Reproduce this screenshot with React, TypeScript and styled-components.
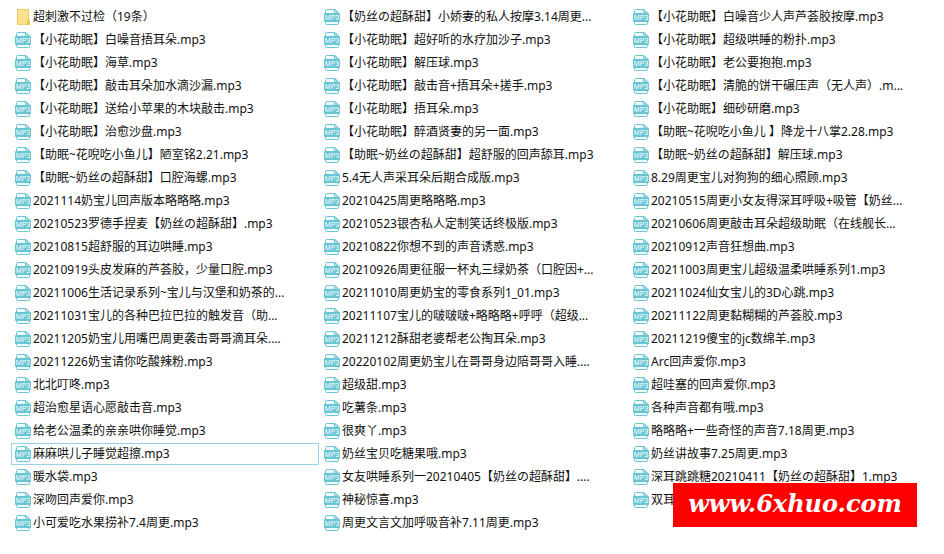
import React from "react";
import styled, { createGlobalStyle, css } from "styled-components";

const GlobalStyle = createGlobalStyle`
  body {
    margin: 0;
    background: #fff;
    color: #111;
    font-family: "Noto Sans", "Noto Sans CJK SC", sans-serif;
    font-size: 12px;
    line-height: 20px;
  }
`;

const Page = styled.main`
  position: relative;
  padding: 6px 7px 20px 11px;
`;

const FileGrid = styled.div`
  display: grid;
  grid-template-columns: repeat(3, minmax(0, 1fr));
  column-gap: 1px;
`;

const FileColumn = styled.ul`
  display: flex;
  flex-direction: column;
  gap: 1px;
  margin: 0;
  padding: 0;
  list-style: none;
`;

const FileRow = styled.li<{ $focused?: boolean }>`
  display: flex;
  align-items: center;
  gap: 2px;
  height: 20px;
  padding: 0 3px;
  border: 1px solid transparent;
  ${(p) =>
    p.$focused &&
    css`
      border-color: #99cfe8;
    `}
`;

const Icon = styled.svg`
  flex: none;
  width: 16px;
  height: 16px;
`;

const FileName = styled.span`
  overflow: hidden;
  white-space: pre;
`;

const Watermark = styled.div`
  position: absolute;
  top: 483px;
  right: 27px;
  padding: 0 15px 2px;
  background: #fe0000;
  color: #fff;
  font: italic bold 24px/42px "DejaVu Serif", serif;
`;

function FolderIcon() {
  return (
    <Icon viewBox="0 0 16 16" aria-hidden="true">
      <path d="M2 0h12v10l1 1v5H2z" fill="#efcb62" />
      <path d="M3 1h10v14H3z" fill="#f9e08c" />
      <path d="M12 10l3 1v5h-3z" fill="#eac858" />
    </Icon>
  );
}

function Mp3Icon() {
  return (
    <Icon viewBox="0 0 16 16" aria-hidden="true">
      <path
        d="M1.5 5V1.5q0-1 1-1H11L14.5 4v1M1.5 12v2.5q0 1 1 1h11q1 0 1-1V12"
        fill="#eefafc"
        stroke="#6cc4d4"
      />
      <path d="M10.5.5V3q0 1 1 1h3z" fill="#c9ecf2" stroke="#6cc4d4" />
      <rect y="4" width="16" height="9" rx="1" fill="#68c5d4" />
      <text
        x="8"
        y="11"
        textAnchor="middle"
        fill="#fff"
        fontFamily="Liberation Sans, sans-serif"
        fontSize="7"
      >
        MP3
      </text>
    </Icon>
  );
}

const FOLDER = "超刺激不过检（19条）";
const FOCUSED = "麻麻哄儿子睡觉超擦.mp3";

const columns: string[][] = [
  [
    FOLDER,
    "【小花助眠】白噪音捂耳朵.mp3",
    "【小花助眠】海草.mp3",
    "【小花助眠】敲击耳朵加水滴沙漏.mp3",
    "【小花助眠】送给小苹果的木块敲击.mp3",
    "【小花助眠】治愈沙盘.mp3",
    "【助眠~花唲吃小鱼儿】陋室铭2.21.mp3",
    "【助眠~奶丝の超酥甜】口腔海螺.mp3",
    "2021114奶宝儿回声版本略略略.mp3",
    "20210523罗德手捏麦【奶丝の超酥甜】.mp3",
    "20210815超舒服的耳边哄睡.mp3",
    "20210919头皮发麻的芦荟胶，少量口腔.mp3",
    "20211006生活记录系列~宝儿与汉堡和奶茶的...",
    "20211031宝儿的各种巴拉巴拉的触发音（助...",
    "20211205奶宝儿用嘴巴周更袭击哥哥滴耳朵....",
    "20211226奶宝请你吃酸辣粉.mp3",
    "北北叮咚.mp3",
    "超治愈星语心愿敲击音.mp3",
    "给老公温柔的亲亲哄你睡觉.mp3",
    FOCUSED,
    "暖水袋.mp3",
    "深吻回声爱你.mp3",
    "小可爱吃水果捞补7.4周更.mp3",
  ],
  [
    "【奶丝の超酥甜】小娇妻的私人按摩3.14周更...",
    "【小花助眠】超好听的水疗加沙子.mp3",
    "【小花助眠】解压球.mp3",
    "【小花助眠】敲击音+捂耳朵+搓手.mp3",
    "【小花助眠】捂耳朵.mp3",
    "【小花助眠】醉酒贤妻的另一面.mp3",
    "【助眠~奶丝の超酥甜】超舒服的回声舔耳.mp3",
    "5.4无人声采耳朵后期合成版.mp3",
    "20210425周更略略略.mp3",
    "20210523银杏私人定制笑话终极版.mp3",
    "20210822你想不到的声音诱惑.mp3",
    "20210926周更征服一杯丸三绿奶茶（口腔因+...",
    "20211010周更奶宝的零食系列1_01.mp3",
    "20211107宝儿的啵啵啵+略略略+呼呼（超级...",
    "20211212酥甜老婆帮老公掏耳朵.mp3",
    "20220102周更奶宝儿在哥哥身边陪哥哥入睡....",
    "超级甜.mp3",
    "吃薯条.mp3",
    "很爽丫.mp3",
    "奶丝宝贝吃糖果哦.mp3",
    "女友哄睡系列一20210405【奶丝の超酥甜】....",
    "神秘惊喜.mp3",
    "周更文言文加呼吸音补7.11周更.mp3",
  ],
  [
    "【小花助眠】白噪音少人声芦荟胶按摩.mp3",
    "【小花助眠】超级哄睡的粉扑.mp3",
    "【小花助眠】老公要抱抱.mp3",
    "【小花助眠】清脆的饼干碾压声（无人声）.m...",
    "【小花助眠】细砂研磨.mp3",
    "【助眠~花唲吃小鱼儿 】降龙十八掌2.28.mp3",
    "【助眠~奶丝の超酥甜】解压球.mp3",
    "8.29周更宝儿对狗狗的细心照顾.mp3",
    "20210515周更小女友得深耳呼吸+吸管【奶丝...",
    "20210606周更敲击耳朵超级助眠（在线舰长...",
    "20210912声音狂想曲.mp3",
    "20211003周更宝儿超级温柔哄睡系列1.mp3",
    "20211024仙女宝儿的3D心跳.mp3",
    "20211122周更黏糊糊的芦荟胶.mp3",
    "20211219傻宝的jc数绵羊.mp3",
    "Arc回声爱你.mp3",
    "超哇塞的回声爱你.mp3",
    "各种声音都有哦.mp3",
    "略略略+一些奇怪的声音7.18周更.mp3",
    "奶丝讲故事7.25周更.mp3",
    "深耳跳跳糖20210411【奶丝の超酥甜】1.mp3",
    "双耳",
  ],
];

export default function App() {
  return (
    <>
      <GlobalStyle />
      <Page>
        <FileGrid>
          {columns.map((names, index) => (
            <FileColumn key={index}>
              {names.map((name) => (
                <FileRow key={name} $focused={name === FOCUSED}>
                  {name === FOLDER ? <FolderIcon /> : <Mp3Icon />}
                  <FileName>{name}</FileName>
                </FileRow>
              ))}
            </FileColumn>
          ))}
        </FileGrid>
        <Watermark>www.6xhuo.com</Watermark>
      </Page>
    </>
  );
}
